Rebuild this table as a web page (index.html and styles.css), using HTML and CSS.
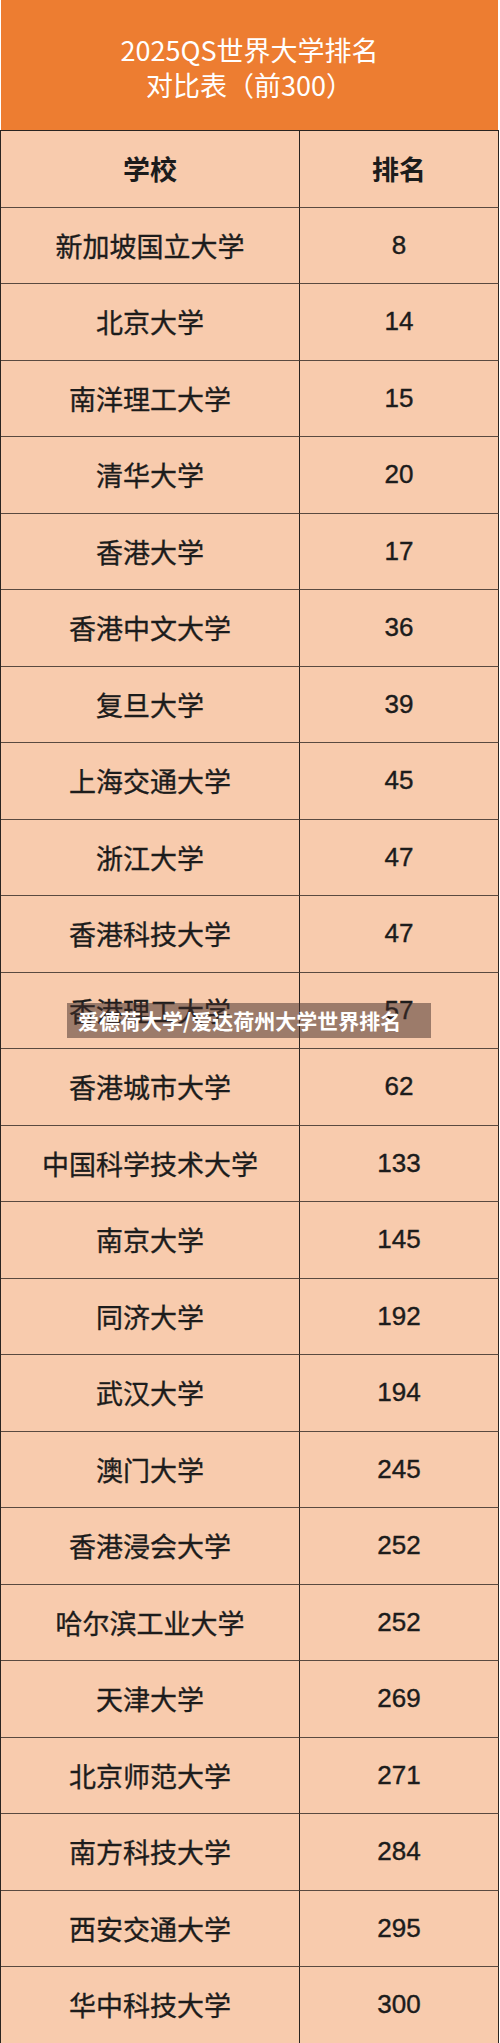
FILE: index.html
```html
<!DOCTYPE html>
<html lang="zh">
<head>
<meta charset="utf-8">
<link rel="stylesheet" href="styles.css">
</head>
<body>
<div class="page">
  <div class="title">
    <div>2025QS世界大学排名</div>
    <div>对比表（前300）</div>
  </div>
  <div class="table">
    <div class="cell head">学校</div><div class="cell head">排名</div>
    <div class="cell name">新加坡国立大学</div><div class="cell num">8</div>
    <div class="cell name">北京大学</div><div class="cell num">14</div>
    <div class="cell name">南洋理工大学</div><div class="cell num">15</div>
    <div class="cell name">清华大学</div><div class="cell num">20</div>
    <div class="cell name">香港大学</div><div class="cell num">17</div>
    <div class="cell name">香港中文大学</div><div class="cell num">36</div>
    <div class="cell name">复旦大学</div><div class="cell num">39</div>
    <div class="cell name">上海交通大学</div><div class="cell num">45</div>
    <div class="cell name">浙江大学</div><div class="cell num">47</div>
    <div class="cell name">香港科技大学</div><div class="cell num">47</div>
    <div class="cell name">香港理工大学</div><div class="cell num">57</div>
    <div class="cell name">香港城市大学</div><div class="cell num">62</div>
    <div class="cell name">中国科学技术大学</div><div class="cell num">133</div>
    <div class="cell name">南京大学</div><div class="cell num">145</div>
    <div class="cell name">同济大学</div><div class="cell num">192</div>
    <div class="cell name">武汉大学</div><div class="cell num">194</div>
    <div class="cell name">澳门大学</div><div class="cell num">245</div>
    <div class="cell name">香港浸会大学</div><div class="cell num">252</div>
    <div class="cell name">哈尔滨工业大学</div><div class="cell num">252</div>
    <div class="cell name">天津大学</div><div class="cell num">269</div>
    <div class="cell name">北京师范大学</div><div class="cell num">271</div>
    <div class="cell name">南方科技大学</div><div class="cell num">284</div>
    <div class="cell name">西安交通大学</div><div class="cell num">295</div>
    <div class="cell name">华中科技大学</div><div class="cell num">300</div>
  </div>
  <div class="watermark">爱德荷大学/爱达荷州大学世界排名</div>
</div>
</body>
</html>
```
FILE: styles.css
```css
html, body {
  margin: 0;
  padding: 0;
  background: #ffffff;
}
.page {
  position: relative;
  width: 500px;
  height: 2043px;
  overflow: hidden;
  font-family: "Liberation Sans", "Noto Sans CJK SC", sans-serif;
  color: #1c1c1c;
}
.title {
  margin-left: 1px;
  width: 497px;
  height: 130px;
  box-sizing: border-box;
  padding-top: 3px;
  background: #ED7D31;
  color: #ffffff;
  font-family: "Noto Sans CJK SC", sans-serif;
  font-size: 27px;
  line-height: 35px;
  display: flex;
  flex-direction: column;
  align-items: center;
  justify-content: center;
}
.table {
  display: grid;
  grid-template-columns: 299px 199px;
  grid-auto-rows: 76.5px;
  border-left: 1px solid #2a2420;
  border-top: 1px solid #2a2420;
  width: 499px;
  box-sizing: border-box;
  background: #F8CBAD;
}
.cell {
  border-right: 1px solid #2a2420;
  border-bottom: 1px solid #5a4a40;
  display: flex;
  align-items: center;
  justify-content: center;
  box-sizing: border-box;
}
.head {
  font-family: "Noto Sans CJK SC", sans-serif;
  font-weight: 700;
  font-size: 27px;
}
.name {
  font-family: "Noto Sans CJK SC", sans-serif;
  font-size: 27px;
  -webkit-text-stroke: 0.35px #1c1c1c;
}
.num {
  font-size: 26px;
  -webkit-text-stroke: 0.4px #1c1c1c;
}
.watermark {
  position: absolute;
  left: 67px;
  top: 1003px;
  width: 364px;
  height: 35px;
  box-sizing: border-box;
  padding-left: 11px;
  background: rgba(64, 43, 39, 0.5);
  color: #ffffff;
  font-family: "Noto Sans CJK SC", sans-serif;
  font-weight: 700;
  font-size: 21px;
  line-height: 35px;
  white-space: nowrap;
}
```
